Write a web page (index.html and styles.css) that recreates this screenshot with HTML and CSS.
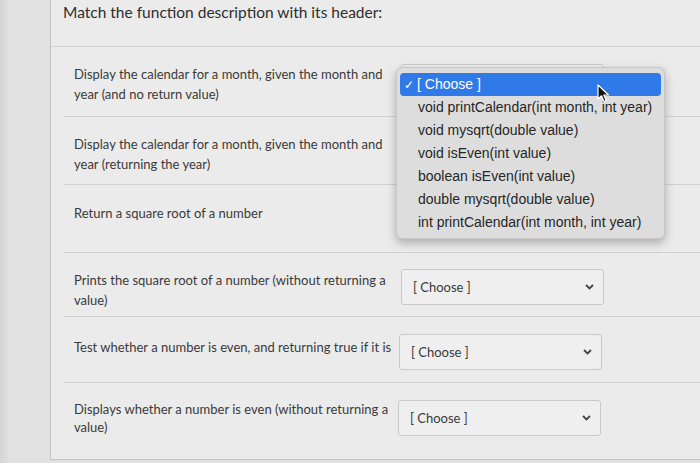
FILE: index.html
```html
<!DOCTYPE html>
<html>
<head>
<meta charset="utf-8">
<link rel="stylesheet" href="styles.css">
</head>
<body>
<div class="page">
  <div class="card">
    <div class="header">Match the function description with its header:</div>
    <div class="rows">
      <div class="row r1">
        <div class="desc">Display the calendar for a month, given the month and year (and no return value)</div>
        <div class="select covered"><span>[ Choose ]</span><svg class="chev" width="9" height="6" viewBox="0 0 9 6"><polyline points="1,1 4.5,4.5 8,1" fill="none" stroke="#444" stroke-width="1.8"/></svg></div>
      </div>
      <div class="row r2">
        <div class="desc">Display the calendar for a month, given the month and year (returning the year)</div>
        <div class="select covered"><span>[ Choose ]</span><svg class="chev" width="9" height="6" viewBox="0 0 9 6"><polyline points="1,1 4.5,4.5 8,1" fill="none" stroke="#444" stroke-width="1.8"/></svg></div>
      </div>
      <div class="row r3">
        <div class="desc">Return a square root of a number</div>
        <div class="select covered"><span>[ Choose ]</span><svg class="chev" width="9" height="6" viewBox="0 0 9 6"><polyline points="1,1 4.5,4.5 8,1" fill="none" stroke="#444" stroke-width="1.8"/></svg></div>
      </div>
      <div class="row r4">
        <div class="desc">Prints the square root of a number (without returning a value)</div>
        <div class="select"><span>[ Choose ]</span><svg class="chev" width="9" height="6" viewBox="0 0 9 6"><polyline points="1,1 4.5,4.5 8,1" fill="none" stroke="#444" stroke-width="1.8"/></svg></div>
      </div>
      <div class="row r5">
        <div class="desc">Test whether a number is even, and returning true if it is</div>
        <div class="select"><span>[ Choose ]</span><svg class="chev" width="9" height="6" viewBox="0 0 9 6"><polyline points="1,1 4.5,4.5 8,1" fill="none" stroke="#444" stroke-width="1.8"/></svg></div>
      </div>
      <div class="row r6">
        <div class="desc">Displays whether a number is even (without returning a value)</div>
        <div class="select"><span>[ Choose ]</span><svg class="chev" width="9" height="6" viewBox="0 0 9 6"><polyline points="1,1 4.5,4.5 8,1" fill="none" stroke="#444" stroke-width="1.8"/></svg></div>
      </div>
    </div>
  </div>

  <div class="menu">
    <div class="item active"><span class="check">✓</span>[ Choose ]</div>
    <div class="item">void printCalendar(int month, int year)</div>
    <div class="item">void mysqrt(double value)</div>
    <div class="item">void isEven(int value)</div>
    <div class="item">boolean isEven(int value)</div>
    <div class="item">double mysqrt(double value)</div>
    <div class="item">int printCalendar(int month, int year)</div>
  </div>

  <svg class="cursor" width="13" height="19" viewBox="0 0 13 19"><path d="M1 1 L1 15 L4.5 11.8 L7 17.5 L9.2 16.5 L6.8 11 L11.5 11 Z" fill="#111" stroke="#fff" stroke-width="1.2" stroke-linejoin="round"/></svg>
</div>
</body>
</html>
```

FILE: styles.css
```css
html, body {
  margin: 0;
  padding: 0;
}
body {
  background: #dedede;
  font-family: Lato, "Noto Sans", sans-serif;
  color: #333;
}
.page {
  position: relative;
  width: 700px;
  height: 463px;
  overflow: hidden;
  background: linear-gradient(90deg, #d4d4d4 0px, #e1e1e1 10px, #e1e1e1 100%);
}
.card {
  margin-left: 50px;
  height: 459px;
  background: #ebebeb;
  border-left: 1px solid #c4c4c4;
  border-bottom: 1px solid #c4c4c4;
  display: flex;
  flex-direction: column;
}
.header {
  height: 47px;
  box-sizing: border-box;
  padding: 1px 0 0 12px;
  font-size: 15.5px;
  line-height: 22px;
  color: #2e2e2e;
  border-bottom: 1px solid #d2d2d2;
}
.rows {
  margin-left: 13px;
  flex: 1;
  display: flex;
  flex-direction: column;
}
.row {
  box-sizing: border-box;
  display: flex;
  align-items: flex-start;
  gap: 5px;
  padding: 17px 0 0 10px;
  border-bottom: 1px solid #d2d2d2;
}
.r1 { height: 70px; }
.r2 { height: 68px; }
.r3 { height: 68px; }
.r4 { height: 64px; }
.r5 { height: 66px; }
.r6 { flex: 1; border-bottom: none; }
.desc {
  width: 322px;
  font-size: 13px;
  line-height: 20px;
  color: #3a3a3a;
}
.r3 .desc { padding-top: 1px; }
.r4 .desc { padding-top: 0; }
.r5 .desc { padding-top: 3px; }
.r6 .desc { line-height: 18px; }
.select {
  width: 203px;
  height: 36px;
  box-sizing: border-box;
  border: 1px solid #c9c9c9;
  border-radius: 3px;
  background: #efefef;
  display: flex;
  align-items: center;
  justify-content: space-between;
  padding: 0 9px 0 11px;
  font-size: 13px;
  color: #3a3a3a;
}
.r4 .select { margin-top: -1px; }
.r5 .select { margin-left: -2px; }
.r6 .select { margin-left: -3px; }
.select.covered span,
.select.covered svg {
  visibility: hidden;
}
.menu {
  position: absolute;
  left: 396px;
  top: 67px;
  width: 269px;
  height: 172px;
  box-sizing: border-box;
  padding: 5px 3px;
  background: #dddddd;
  border: 1px solid #c6c6c6;
  border-radius: 6px;
  box-shadow: 0 4px 10px rgba(0,0,0,0.28);
  font-family: "Liberation Sans", Arial, sans-serif;
  font-size: 14px;
  color: #262626;
}
.item {
  height: 23px;
  line-height: 23px;
  padding-left: 18px;
  white-space: nowrap;
}
.item.active {
  background: #2f7ae8;
  color: #fff;
  border-radius: 4px;
  padding-left: 4px;
}
.check {
  display: inline-block;
  width: 13px;
  font-size: 12px;
}
.cursor {
  position: absolute;
  left: 597px;
  top: 84px;
}
```
